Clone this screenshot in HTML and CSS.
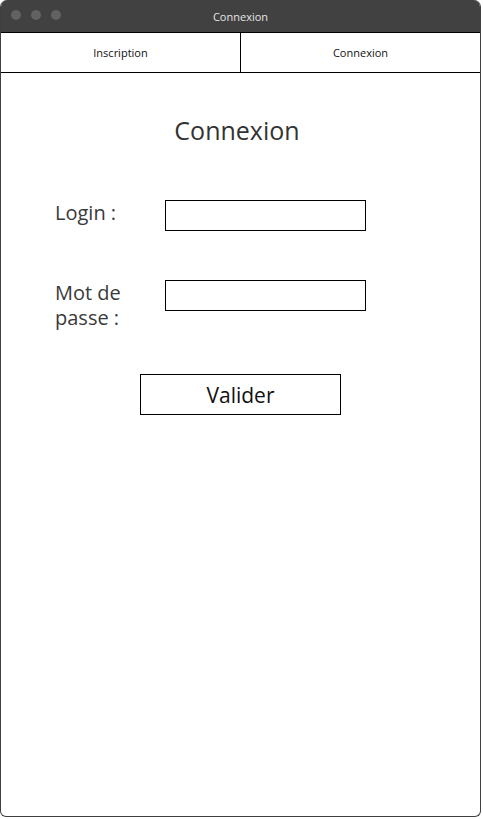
FILE: index.html
```
<!DOCTYPE html>
<html lang="fr">
<head>
<meta charset="utf-8">
<title>Connexion</title>
<link rel="stylesheet" href="styles.css">
</head>
<body>
<div class="window">
  <div class="titlebar">
    <div class="dots"><span class="dot"></span><span class="dot"></span><span class="dot"></span></div>
    <div class="title">Connexion</div>
  </div>
  <nav class="tabs">
    <div class="tab">Inscription</div>
    <div class="tab">Connexion</div>
  </nav>
  <main class="content">
    <h1 class="heading">Connexion</h1>
    <form class="form">
      <label class="label">Login :</label>
      <div class="field"></div>
      <label class="label">Mot de<br>passe :</label>
      <div class="field"></div>
    </form>
    <div class="actions"><div class="button">Valider</div></div>
  </main>
</div>
</body>
</html>
```
FILE: styles.css
```
* { box-sizing: border-box; }
html, body { margin: 0; padding: 0; background: #fff; }
body { font-family: "Open Sans", "Noto Sans", sans-serif; width: 483px; height: 819px; overflow: hidden; }
.window {
  width: 481px;
  height: 817px;
  border: 1px solid #3f3f3f;
  border-top: none;
  border-radius: 7px 7px 6px 6px;
  overflow: hidden;
  display: flex;
  flex-direction: column;
  background: #fff;
}
.titlebar {
  height: 32px;
  background: #414141;
  position: relative;
  display: flex;
  align-items: center;
  justify-content: center;
  margin: 0 -1px;
}
.dots { position: absolute; left: 11px; top: 10px; display: flex; gap: 10px; }
.dot { width: 10px; height: 10px; border-radius: 50%; background: #626262; }
.title { color: #e6e6e6; font-size: 11px; padding-top: 1px; }
.tabs {
  display: grid;
  grid-template-columns: 239px 1fr;
  height: 41px;
  border-top: 1px solid #000;
  border-bottom: 1px solid #000;
  margin: 0 -1px;
  border-left: 1px solid #000;
  border-right: 1px solid #000;
}
.tab { display: flex; align-items: center; justify-content: center; font-size: 11px; color: #111; }
.tab + .tab { border-left: 1px solid #000; }
.content { flex: 1; display: flex; flex-direction: column; }
.heading {
  margin: 40px 0 0 0;
  padding-right: 7px;
  text-align: center;
  font-weight: 400;
  font-size: 25px;
  line-height: 34px;
  color: #333;
}
.form {
  margin: 53px 0 0 54px;
  display: grid;
  grid-template-columns: 110px 201px;
  row-gap: 49px;
  align-items: start;
}
.label { font-size: 20px; line-height: 25px; color: #3a3a3a; }
.field { height: 31px; border: 1px solid #000; }
.actions { display: flex; justify-content: center; margin-top: 44px; }
.button {
  width: 201px;
  height: 41px;
  border: 1px solid #000;
  display: flex;
  align-items: center;
  justify-content: center;
  font-size: 21px;
  color: #111;
}
```
